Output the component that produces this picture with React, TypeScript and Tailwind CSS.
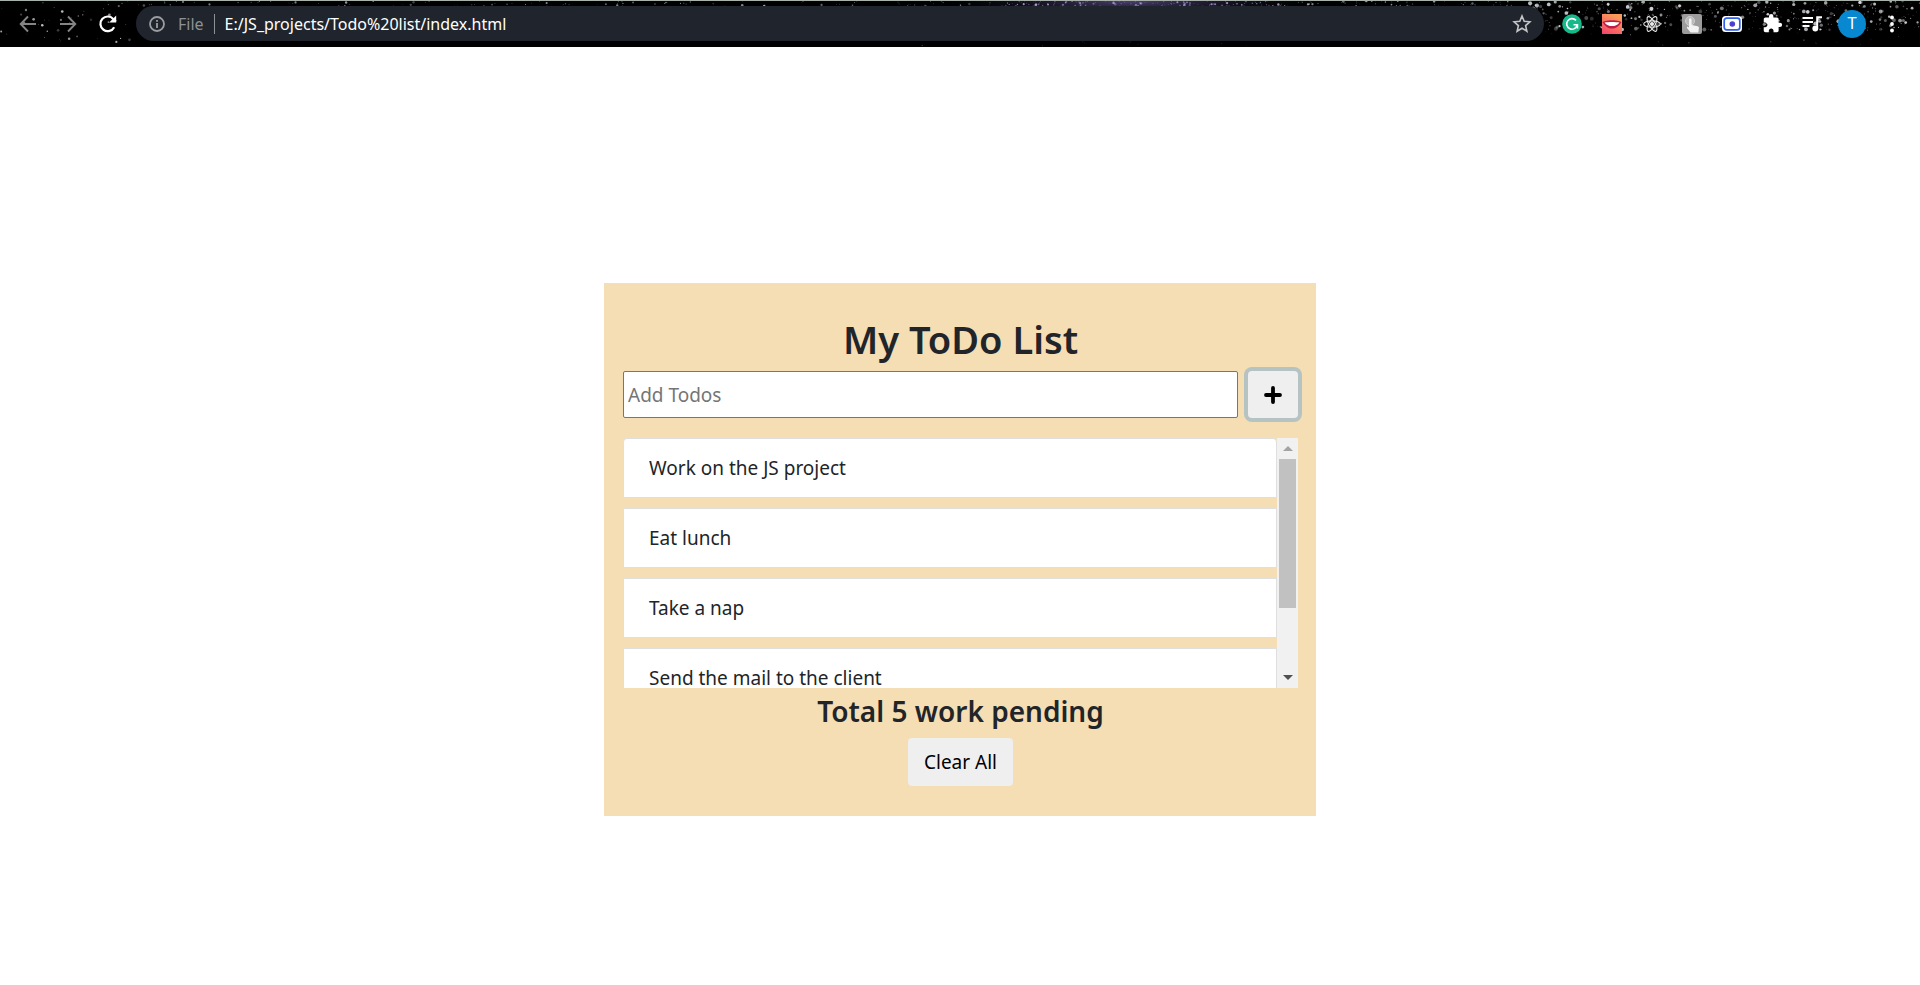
import type { ReactNode } from 'react';

const todos = [
  'Work on the JS project',
  'Eat lunch',
  'Take a nap',
  'Send the mail to the client',
];

type Star = { x: number; y: number; r: number; o: number; tint: string };

function makeStars(): Star[] {
  let seed = 20210;
  const rand = () => {
    seed = (seed * 1103515245 + 12345) % 2147483648;
    return seed / 2147483648;
  };
  const stars: Star[] = [];
  const fill = (count: number, x0: number, x1: number, y1: number, max: number, tint: string) => {
    for (let i = 0; i < count; i++) {
      const big = rand();
      stars.push({
        x: x0 + rand() * (x1 - x0),
        y: 1 + rand() * y1,
        r: 0.4 + big * big * big * max,
        o: 0.2 + rand() * 0.7,
        tint,
      });
    }
  };
  fill(45, 0, 135, 44, 1, '#d5d5d5');
  fill(110, 135, 1000, 6, 0.9, '#b9c0c8');
  fill(170, 1000, 1290, 6, 0.9, '#b3a3e0');
  fill(60, 1290, 1520, 6, 0.9, '#b9c4d8');
  fill(420, 1490, 1920, 29, 1.7, '#e4e6ec');
  fill(90, 1490, 1920, 45, 0.3, '#8f959c');
  fill(60, 900, 1290, 45, 0.2, '#77708f');
  return stars;
}

const stars = makeStars();

function StarField() {
  return (
    <svg
      aria-hidden="true"
      className="absolute inset-0 size-full"
      viewBox="0 0 1920 47"
      preserveAspectRatio="none"
    >
      <defs>
        <radialGradient id="nebula">
          <stop offset="0" stopColor="#6b5a9c" stopOpacity="0.75" />
          <stop offset="1" stopColor="#10142c" stopOpacity="0" />
        </radialGradient>
      </defs>
      <ellipse cx="1130" cy="0" rx="190" ry="24" fill="url(#nebula)" />
      {stars.map((s, i) => (
        <circle key={i} cx={s.x} cy={s.y} r={s.r} fill={s.tint} opacity={s.o} />
      ))}
      <rect width="1920" height="1" fill="#a9b1ab" />
    </svg>
  );
}

function BarButton({ label, children }: { label: string; children: ReactNode }) {
  return (
    <button type="button" aria-label={label} className="flex h-9 w-10 shrink-0 items-center justify-center">
      {children}
    </button>
  );
}

function ArrowIcon({ back }: { back?: boolean }) {
  return (
    <svg viewBox="0 0 20 20" className="size-5" fill="none" stroke="#858585" strokeWidth="1.9">
      <path d={back ? 'M18 10H3M10 2.5L2.7 10l7.3 7.5' : 'M2 10h15M10 2.5l7.3 7.5-7.3 7.5'} />
    </svg>
  );
}

function BrowserBar() {
  return (
    <header className="relative bg-black">
      <StarField />
      <div className="relative flex h-[47px] items-center gap-2 px-2">
        <nav aria-label="History" className="flex">
          <BarButton label="Back">
            <ArrowIcon back />
          </BarButton>
          <BarButton label="Forward">
            <ArrowIcon />
          </BarButton>
          <BarButton label="Reload">
            <svg viewBox="0 0 20 20" className="size-5" fill="none">
              <path d="M16.2 13.2A7.3 7.3 0 1 1 15.4 5.2" stroke="#fff" strokeWidth="2.2" />
              <path d="M18.2 1.6v7h-7z" fill="#fff" />
            </svg>
          </BarButton>
        </nav>

        <div className="flex h-[35px] min-w-0 flex-1 items-center rounded-full bg-[#20242c] px-3 font-['Noto_Sans','Segoe_UI',sans-serif] text-[16px]">
          <svg aria-hidden="true" viewBox="0 0 18 18" className="size-[18px] shrink-0" fill="none" stroke="#9a9da1" strokeWidth="1.8">
            <circle cx="9" cy="9" r="7" />
            <path d="M9 8v5M9 5v1.8" />
          </svg>
          <span className="ml-3 text-[#8d9094]">File</span>
          <span className="mx-2.5 h-5 w-px bg-[#8d9094]" />
          <input
            aria-label="Address"
            defaultValue="E:/JS_projects/Todo%20list/index.html"
            className="min-w-0 flex-1 bg-transparent text-white outline-none"
          />
          <button type="button" aria-label="Bookmark this page">
            <svg viewBox="0 0 20 20" className="size-5" fill="none" stroke="#c3c5c8" strokeWidth="1.6">
              <path d="M10 2l2.2 5.3 5.7.5-4.3 3.8 1.3 5.6-4.9-3-4.9 3 1.3-5.6-4.3-3.8 5.7-.5z" />
            </svg>
          </button>
        </div>

        <div className="flex items-center">
          <BarButton label="Grammarly">
            <svg viewBox="0 0 20 20" className="size-5">
              <circle cx="10" cy="10" r="9.8" fill="#15b98a" />
              <path d="M14 6.4A5.3 5.3 0 1 0 15.2 11" fill="none" stroke="#fff" strokeWidth="1.6" />
              <path d="M11.5 10.8h4v3.6" fill="none" stroke="#fff" strokeWidth="1.5" />
            </svg>
          </BarButton>
          <BarButton label="Smile">
            <svg viewBox="0 0 20 20" className="size-5">
              <defs>
                <linearGradient id="lips" x1="0" y1="1" x2="0.5" y2="0">
                  <stop offset="0" stopColor="#f4426c" />
                  <stop offset="1" stopColor="#fb9a5a" />
                </linearGradient>
              </defs>
              <rect width="20" height="20" fill="url(#lips)" />
              <path d="M0.5 8C4 7 7.5 5.8 10 6.6 12.5 5.8 16 7 19.5 8 17 12.6 13.5 14.5 10 14.5S3 12.6 0.5 8z" fill="#c01c46" />
              <path d="M2.5 8.5c4-.8 11-.8 15 0-2 2.6-4.5 3.6-7.5 3.6s-5.5-1-7.5-3.6z" fill="#fff" />
            </svg>
          </BarButton>
          <BarButton label="React Developer Tools">
            <svg viewBox="0 0 20 20" className="size-[18px]" fill="none" stroke="#e8e8e8" strokeWidth="1.2">
              <ellipse cx="10" cy="10" rx="9.2" ry="3.5" />
              <ellipse cx="10" cy="10" rx="9.2" ry="3.5" transform="rotate(60 10 10)" />
              <ellipse cx="10" cy="10" rx="9.2" ry="3.5" transform="rotate(120 10 10)" />
              <circle cx="10" cy="10" r="1.7" fill="#e8e8e8" />
            </svg>
          </BarButton>
          <BarButton label="Click tool">
            <svg viewBox="0 0 20 20" className="size-5">
              <rect width="20" height="20" rx="2" fill="#9c9c9c" />
              <circle cx="8" cy="7" r="4.5" fill="#b8b8b8" stroke="#cfcfcf" />
              <path d="M7 5.5a1.3 1.3 0 0 1 2.6 0V11l6 1.2c1 .2 1.4.9 1.3 1.8L16.3 18.5H8.6L5 14c-.6-1 .5-1.8 2-.6z" fill="#f3f3f3" />
            </svg>
          </BarButton>
          <BarButton label="Screen recorder">
            <svg viewBox="0 0 20 16" className="h-4 w-5">
              <rect width="20" height="16" rx="3.5" fill="#fff" />
              <rect x="2.2" y="2.2" width="15.6" height="11.6" rx="2.5" fill="#fff" stroke="#2f62e8" strokeWidth="1.7" />
              <circle cx="10.3" cy="8" r="2.8" fill="#4a3fd0" />
            </svg>
          </BarButton>
          <BarButton label="Extensions">
            <svg viewBox="0 0 24 24" className="size-[21px]" fill="#fff">
              <path d="M20.5 11H19V7c0-1.1-.9-2-2-2h-4V3.5a2.5 2.5 0 0 0-5 0V5H4c-1.1 0-2 .9-2 2v3.8h1.5c1.5 0 2.7 1.2 2.7 2.7s-1.2 2.7-2.7 2.7H2V20c0 1.1.9 2 2 2h3.8v-1.5c0-1.5 1.2-2.7 2.7-2.7s2.7 1.2 2.7 2.7V22H17c1.1 0 2-.9 2-2v-4h1.5a2.5 2.5 0 0 0 0-5z" />
            </svg>
          </BarButton>
          <BarButton label="Media controls">
            <svg viewBox="0 0 20 18" className="h-[18px] w-5" fill="none" stroke="#fff" strokeWidth="1.8">
              <path d="M0.5 3H11M0.5 7H11M0.5 11H7.5" />
              <path d="M15.2 13.5V2.3H20" strokeWidth="2" />
              <circle cx="13.3" cy="13.5" r="2.9" fill="#fff" stroke="none" />
            </svg>
          </BarButton>
          <BarButton label="Profile">
            <span className="flex size-7 items-center justify-center rounded-full bg-[#0788d1] font-[Roboto,sans-serif] text-[16px] text-white">
              T
            </span>
          </BarButton>
          <BarButton label="Menu">
            <svg viewBox="0 0 4 18" className="h-[18px] w-1" fill="#fff">
              <circle cx="2" cy="2.5" r="1.9" />
              <circle cx="2" cy="9" r="1.9" />
              <circle cx="2" cy="15.5" r="1.9" />
            </svg>
          </BarButton>
        </div>
      </div>
    </header>
  );
}

function ScrollBar() {
  return (
    <div className="flex w-[21px] shrink-0 flex-col items-center bg-[#f1f1f1]">
      <button type="button" aria-label="Scroll up" className="flex h-[21px] w-full shrink-0 items-center justify-center">
        <svg viewBox="0 0 10 5" className="h-[5px] w-2.5" fill="#a3a3a3">
          <path d="M5 0l5 5H0z" />
        </svg>
      </button>
      <div className="w-full flex-1 px-0.5">
        <div className="h-[149px] bg-[#c1c1c1]" />
      </div>
      <button type="button" aria-label="Scroll down" className="flex h-[21px] w-full shrink-0 items-center justify-center">
        <svg viewBox="0 0 10 5" className="h-[5px] w-2.5" fill="#505050">
          <path d="M0 0h10L5 5z" />
        </svg>
      </button>
    </div>
  );
}

export default function App() {
  return (
    <div className="min-h-screen bg-white">
      <BrowserBar />
      <main className="flex justify-center pt-59 font-['Noto_Sans','Segoe_UI',sans-serif] text-[19px] text-[#212529]">
        <section className="w-full max-w-178 bg-[#f5deb3] pt-8 pr-[18px] pb-[30px] pl-[19px]">
          <h1 className="mb-2 text-center text-[38px] leading-[48px] font-semibold">My ToDo List</h1>

          <form className="flex gap-2.5" onSubmit={(e) => e.preventDefault()}>
            <input
              type="text"
              aria-label="Add Todos"
              placeholder="Add Todos"
              className="h-[47px] min-w-0 flex-1 rounded-xs border border-[#767676] bg-white px-1 outline-none placeholder:text-[#757575]"
            />
            <button
              type="submit"
              aria-label="Add"
              className="flex h-[47px] w-[50px] shrink-0 items-center justify-center rounded-sm bg-[#efefef] ring-4 ring-[#b5c3c3]"
            >
              <svg viewBox="0 0 18 18" className="size-[18px]" stroke="#000" strokeWidth="3.8" strokeLinecap="round">
                <path d="M9 2v14M2 9h14" />
              </svg>
            </button>
          </form>

          <div className="mt-5 flex h-[250px] overflow-hidden">
            <ul className="flex min-w-0 flex-1 flex-col gap-2.5 overflow-hidden">
              {todos.map((todo) => (
                <li
                  key={todo}
                  className="h-[60px] shrink-0 border border-[#dfdfdf] bg-white px-[25px] leading-[58px] first:rounded-t-sm"
                >
                  {todo}
                </li>
              ))}
            </ul>
            <ScrollBar />
          </div>

          <h2 className="mt-1 mb-2 text-center text-[28px] leading-[38px] font-semibold">Total 5 work pending</h2>
          <div className="flex justify-center">
            <button type="button" className="h-12 rounded-sm bg-[#efefef] px-4 text-black">
              Clear All
            </button>
          </div>
        </section>
      </main>
    </div>
  );
}
